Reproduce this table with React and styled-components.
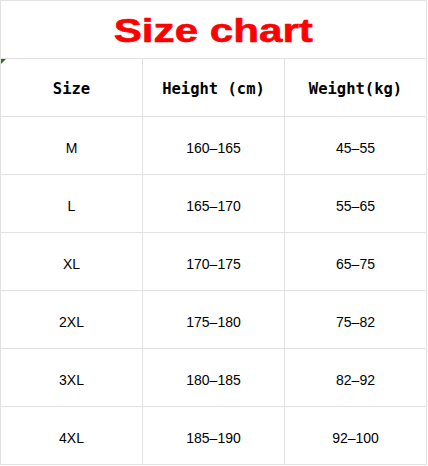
import React from 'react';
import styled, { createGlobalStyle } from 'styled-components';

const GlobalStyle = createGlobalStyle`
  html, body {
    margin: 0;
    padding: 0;
    background: #ffffff;
  }
`;

const sizes = [
  { size: 'M', height: '160–165', weight: '45–55' },
  { size: 'L', height: '165–170', weight: '55–65' },
  { size: 'XL', height: '170–175', weight: '65–75' },
  { size: '2XL', height: '175–180', weight: '75–82' },
  { size: '3XL', height: '180–185', weight: '82–92' },
  { size: '4XL', height: '185–190', weight: '92–100' }
];

const Chart = styled.div`
  display: grid;
  grid-template-columns: repeat(3, 142px);
  grid-auto-rows: 58px;
  width: 427px;
  border-top: 1px solid #e1e1e1;
  border-left: 1px solid #e1e1e1;
  box-sizing: border-box;
`;

const Cell = styled.div`
  position: relative;
  display: flex;
  align-items: center;
  justify-content: center;
  box-sizing: border-box;
  border-right: 1px solid #e1e1e1;
  border-bottom: 1px solid #e1e1e1;
  color: #000;
  font-family: 'Liberation Sans', Arial, sans-serif;
  font-size: 14px;
  padding-top: ${(p) => (p.$head ? '2px' : '4px')};
`;

const TitleCell = styled(Cell)`
  grid-column: 1 / -1;
  padding-top: 0;
`;

const Title = styled.span`
  display: inline-block;
  color: #ff0000;
  font-family: 'Liberation Sans', Arial, sans-serif;
  font-weight: 900;
  font-size: 34px;
  line-height: 1;
  transform: scaleX(1.24);
  -webkit-text-stroke: 0.6px #ff0000;
`;

const HeadCell = styled(Cell)`
  font-family: 'DejaVu Sans Mono', 'Liberation Mono', monospace;
  font-weight: bold;
  font-size: 15.5px;
  white-space: pre;

  ${(p) =>
    p.$marked &&
    `
    &::before {
      content: '';
      position: absolute;
      top: 0;
      left: 0;
      border-top: 5px solid #1e7a1e;
      border-right: 5px solid transparent;
    }
  `}
`;

export default function App() {
  return (
    <>
      <GlobalStyle />
      <Chart>
        <TitleCell>
          <Title>Size chart</Title>
        </TitleCell>
        <HeadCell $head $marked>Size</HeadCell>
        <HeadCell $head>Height (cm)</HeadCell>
        <HeadCell $head>Weight(kg)</HeadCell>
        {sizes.map((row) => (
          <React.Fragment key={row.size}>
            <Cell>{row.size}</Cell>
            <Cell>{row.height}</Cell>
            <Cell>{row.weight}</Cell>
          </React.Fragment>
        ))}
      </Chart>
    </>
  );
}
